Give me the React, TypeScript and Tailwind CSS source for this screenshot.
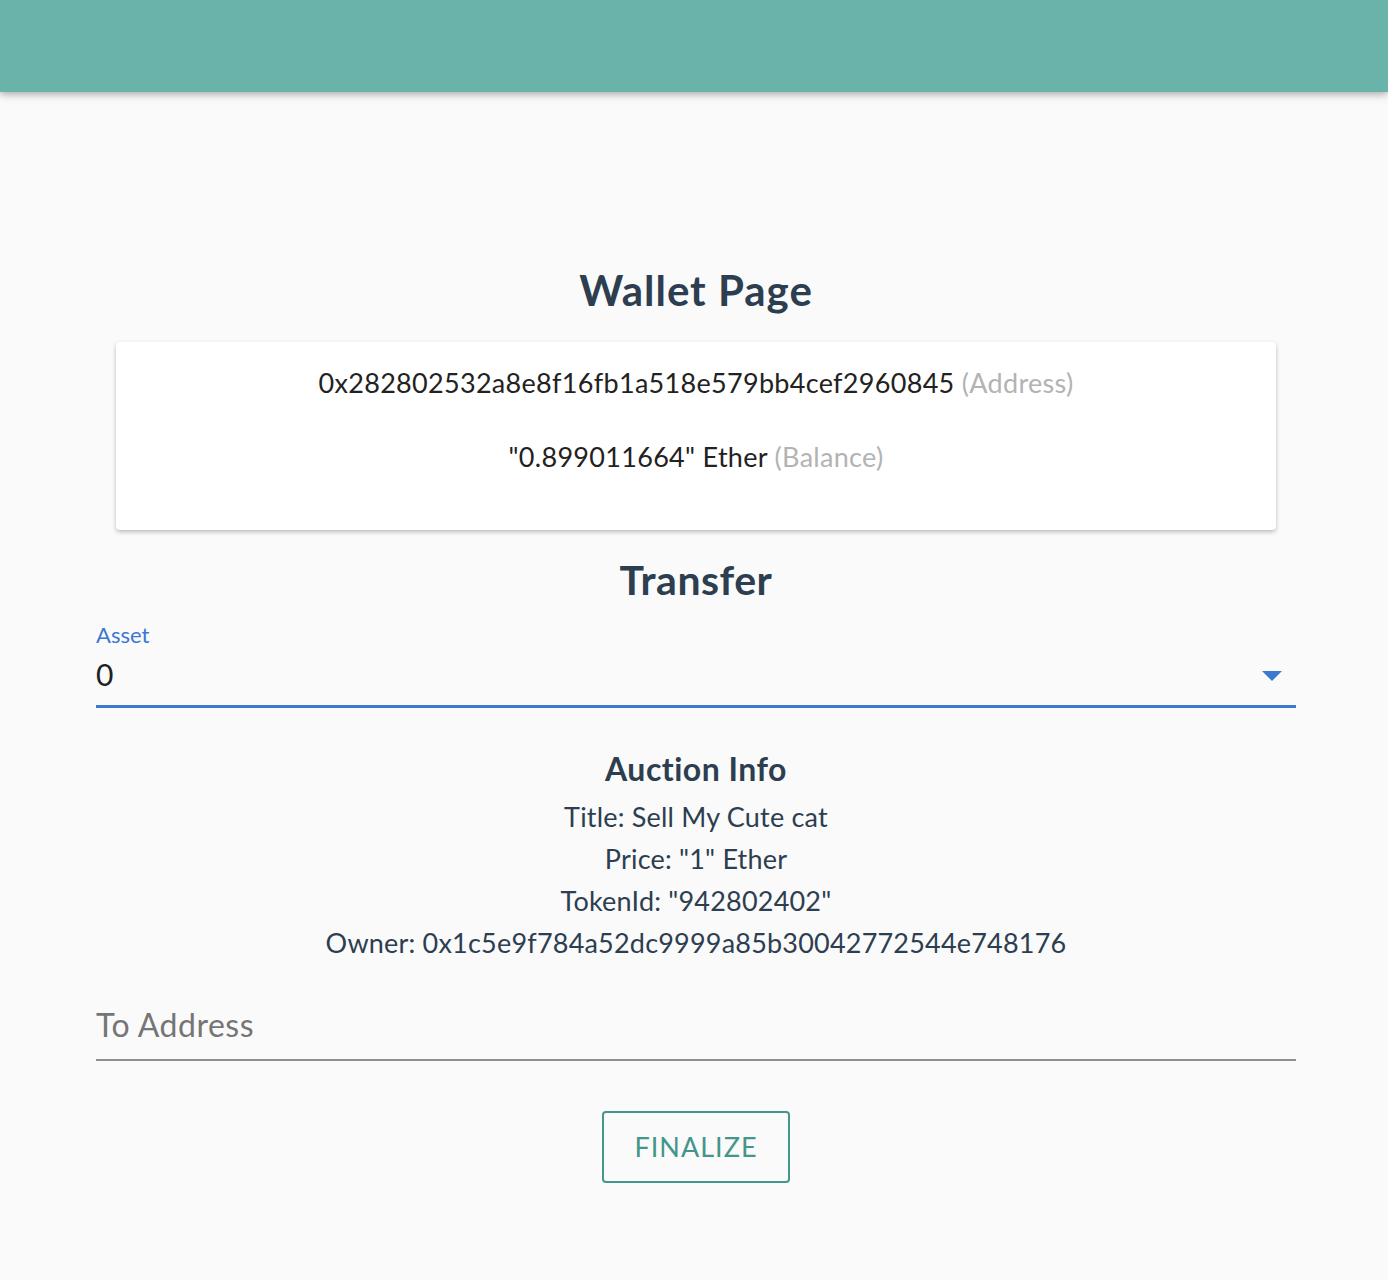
export default function App() {
  return (
    <div
      className="min-h-[1280px] bg-[#fafafa] text-[#2c3e50]"
      style={{ fontFamily: 'Lato, "Noto Sans", sans-serif' }}
    >
      {/* Toolbar */}
      <header className="h-[92px] bg-[#6ab3ab] shadow-[0_2px_8px_rgba(0,0,0,0.35)]" />

      <main className="pl-[96px] pr-[92px] pt-[162px]">
        <h1 className="text-center text-[42px] font-bold leading-[72px] tracking-[1px]">Wallet Page</h1>

        {/* Account card */}
        <div className="mx-[20px] mt-[16px] rounded-[4px] bg-white pt-[22px] pb-[54px] text-center text-[27px] tracking-[0.3px] text-[#222] shadow-[0_2px_4px_rgba(0,0,0,0.25)]">
          <p className="leading-[38px]">
            0x282802532a8e8f16fb1a518e579bb4cef2960845{' '}
            <span className="text-[#b3b3b3]">(Address)</span>
          </p>
          <p className="mt-[36px] leading-[38px]">
            "0.899011664" Ether <span className="text-[#b3b3b3]">(Balance)</span>
          </p>
        </div>

        <h2 className="mt-[18px] text-center text-[41px] font-bold leading-[64px] tracking-[0.5px]">Transfer</h2>

        {/* Asset select */}
        <div className="mt-[10px]">
          <label className="block text-[22px] leading-[26px] text-[#3b78d1]">Asset</label>
          <div className="flex items-center justify-between border-b-[3px] border-[#3b78d1] pb-[12px] pt-[7px]">
            <span className="text-[30px] leading-[38px] text-[#212121]">0</span>
            <svg width="20" height="10" viewBox="0 0 20 10" className="mr-[14px] mt-[4px]">
              <path d="M0 0 L20 0 L10 10 Z" fill="#3b78d1" />
            </svg>
          </div>
        </div>

        {/* Auction info */}
        <div className="mt-[41px] text-center">
          <h3 className="text-[32px] font-bold leading-[40px] tracking-[0.5px]">Auction Info</h3>
          <div className="mt-[7px] text-[27px] leading-[42px] tracking-[0.2px]">
            <p>Title: Sell My Cute cat</p>
            <p>Price: "1" Ether</p>
            <p>TokenId: "942802402"</p>
            <p>Owner: 0x1c5e9f784a52dc9999a85b30042772544e748176</p>
          </div>
        </div>

        {/* To address */}
        <div className="mt-[41px] border-b-2 border-[#8f8f8f] pb-[14px]">
          <input
            placeholder="To Address"
            className="w-full bg-transparent text-[32px] leading-[40px] tracking-[0.5px] text-[#212121] placeholder:text-[#757575] outline-none"
          />
        </div>

        <div className="mt-[50px] flex justify-center">
          <button className="h-[72px] w-[188px] rounded-[4px] border-2 border-[#42968a] text-[27px] tracking-[1px] text-[#42968a]">
            FINALIZE
          </button>
        </div>
      </main>
    </div>
  );
}
